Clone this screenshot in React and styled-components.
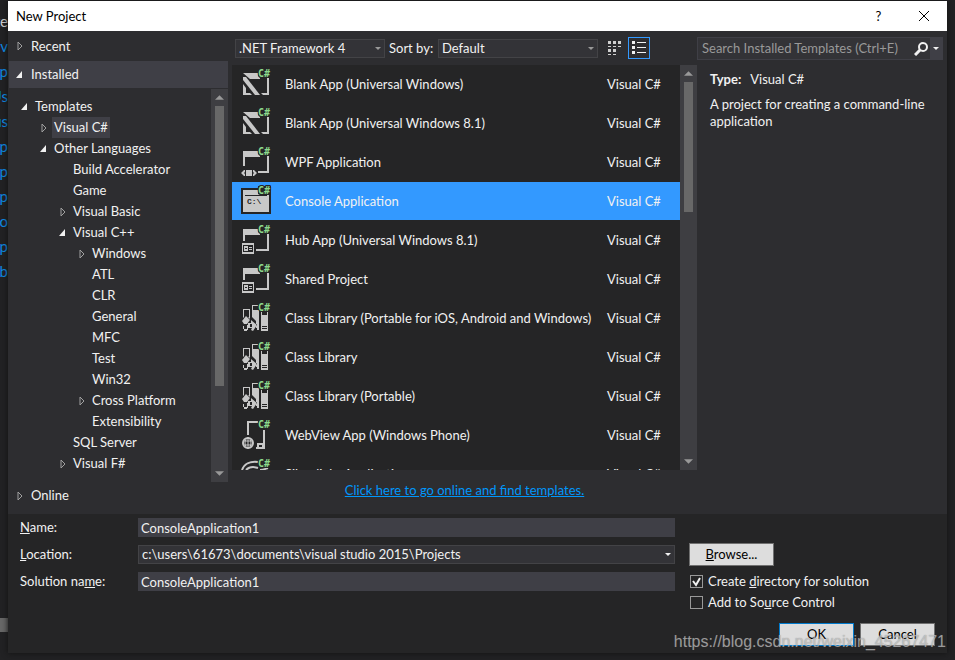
import React, { useState } from "react";
import styled, { createGlobalStyle, css } from "styled-components";

const GlobalStyle = createGlobalStyle`
  * {
    box-sizing: border-box;
  }
  body {
    margin: 0;
    background: #252526;
  }
  body, button, input, select {
    font-family: Lato, "Noto Sans", sans-serif;
    font-size: 13px;
    line-height: 17px;
  }
  ul {
    list-style: none;
    margin: 0;
    padding: 0;
  }
`;

const editorLines = ["te", "nv", "ip", "Us", "us", "ip", "ip", "ip", "lo", "ip", "ib"];

const tree = [
  { label: "Templates", level: 0, state: "open" },
  { label: "Visual C#", level: 1, state: "closed" },
  { label: "Other Languages", level: 1, state: "open" },
  { label: "Build Accelerator", level: 2 },
  { label: "Game", level: 2 },
  { label: "Visual Basic", level: 2, state: "closed" },
  { label: "Visual C++", level: 2, state: "open" },
  { label: "Windows", level: 3, state: "closed" },
  { label: "ATL", level: 3 },
  { label: "CLR", level: 3 },
  { label: "General", level: 3 },
  { label: "MFC", level: 3 },
  { label: "Test", level: 3 },
  { label: "Win32", level: 3 },
  { label: "Cross Platform", level: 3, state: "closed" },
  { label: "Extensibility", level: 3 },
  { label: "SQL Server", level: 2 },
  { label: "Visual F#", level: 2, state: "closed" },
];

const templates = [
  { name: "Blank App (Universal Windows)", icon: "blank" },
  { name: "Blank App (Universal Windows 8.1)", icon: "blank" },
  { name: "WPF Application", icon: "wpf" },
  { name: "Console Application", icon: "console" },
  { name: "Hub App (Universal Windows 8.1)", icon: "hub" },
  { name: "Shared Project", icon: "hub" },
  { name: "Class Library (Portable for iOS, Android and Windows)", icon: "library" },
  { name: "Class Library", icon: "library" },
  { name: "Class Library (Portable)", icon: "library" },
  { name: "WebView App (Windows Phone)", icon: "webview" },
  { name: "Silverlight Application", icon: "silverlight" },
];

const shapes = {
  blank: (
    <g fill="#c8c8c8">
      <path d="M2 5h15v3l2 2v1H9z" />
      <path d="M2 9h3l14 18h-5L2 12z" />
      <path d="M2 16l3 4v5h4l2 2H2z" />
      <path d="M26 10h2v17h-6l-2-2h6z" />
    </g>
  ),
  wpf: (
    <g fill="#c8c8c8">
      <path d="M2 5h15v3l2 2v1H4v9H2z" />
      <path d="M26 10h2v17H17v-2h9z" />
      <path d="M5 24h6v6H5z" />
      <path d="M3 24l-3 3 3 3h1v-2l-1-1 1-1v-2zM13 24l3 3-3 3h-1v-2l1-1-1-1v-2z" />
    </g>
  ),
  console: (
    <g>
      <path d="M0 3h17V1h13v28H0z" fill="#252526" />
      <path d="M2 5h15v4l2 1h9v17H2z" fill="#c8c8c8" />
      <path d="M4 10h22v1H4z" fill="#252526" />
      <text x="6" y="19" fontSize="8" fontWeight="bold" fill="#252526" fontFamily="Liberation Mono, monospace">
        C:\
      </text>
    </g>
  ),
  hub: (
    <g fill="#c8c8c8">
      <path d="M2 5h15v3l2 2v1H4v6H2z" />
      <path d="M26 10h2v17H15v-2h11z" />
      <path d="M1 19h12v11H1z" />
      <path d="M2 21h10v7H2z" fill="#252526" />
      <path d="M3 22h4v5H3zM8 23h3v1H8zM8 25h3v1H8z" />
      <path d="M4 24h2v1H4z" fill="#252526" />
    </g>
  ),
  library: (
    <g fill="#c8c8c8">
      <path d="M2 7h7v10l-2-2h1V8H3v7l-1 1z" />
      <path d="M11 3h6v1h-5v4h6v20h-2v-2h-1v-2h1v-2h-1v-3l-4-4z" />
      <path d="M20 9h1v4h5v-3h1v19h-7z" />
      <path d="M21 24h5v1h-5zM21 26h5v1h-5z" fill="#252526" />
      <path d="M5 14l4 4-3 4H3l-2-3z" />
      <path d="M2 24h1v3H2zM3 27h3v2H3z" />
      <path d="M7 21h3v-3l6 5-4 6-2-1 1-2H7v2H6v-5h1z" />
      <path d="M9 22h2v3H9z" fill="#252526" />
    </g>
  ),
  webview: (
    <g fill="#c8c8c8">
      <path d="M6 2h11v2H8v12H6z" />
      <path d="M22 11h2v19h-9v-2h1v-4h6z" />
      <path d="M18 26h3v2h-3z" fill="#252526" />
      <g fill="none" stroke="#c8c8c8">
        <circle cx="7" cy="24" r="5" strokeWidth="2" />
        <ellipse cx="7" cy="24" rx="3" ry="5" />
        <path d="M2 22h10M2 26h10M7 18v12" />
      </g>
    </g>
  ),
  silverlight: (
    <g fill="none" stroke="#c8c8c8" strokeWidth="2">
      <path d="M1 12C3 6 9 3 17 4" />
      <path d="M5 12c4-4 9-3 12-2" />
      <path d="M19 12c3 0 5-1 8-2" />
    </g>
  ),
};

const TemplateIcon = ({ type }) => (
  <svg width="32" height="32" viewBox="0 0 32 32" aria-hidden="true">
    {shapes[type]}
    <text
      x="17"
      y="9"
      fontSize="10"
      fontWeight="bold"
      fill="#8cd98c"
      stroke="#252526"
      strokeWidth="2"
      paintOrder="stroke"
      fontFamily="DejaVu Sans Mono, monospace"
    >
      C#
    </text>
  </svg>
);

const Arrow = ({ state }) => (
  <svg width="8" height="10" viewBox="0 0 8 10" aria-hidden="true">
    {state === "open" && <path d="M6 1v7H0z" fill="#f1f1f1" />}
    {state === "closed" && <path d="M2 1l4 4-4 4z" fill="none" stroke="#a0a0a0" />}
  </svg>
);

const Caret = ({ color = "#999999" }) => (
  <svg width="6" height="3" viewBox="0 0 6 3" aria-hidden="true">
    <path d="M0 0h6L3 3z" fill={color} />
  </svg>
);

const Combo = ({ id, label, caret, options }) => (
  <ComboBox>
    <select id={id} aria-label={label}>
      {options.map((o) => (
        <option key={o}>{o}</option>
      ))}
    </select>
    <Caret color={caret} />
  </ComboBox>
);

const Scroll = ({ size }) => (
  <ScrollBar>
    <svg width="9" height="5" viewBox="0 0 10 5">
      <path d="M0 5h10L5 0z" fill="#999" />
    </svg>
    <Track>
      <Thumb $size={size} />
    </Track>
    <svg width="9" height="5" viewBox="0 0 10 5">
      <path d="M0 0h10L5 5z" fill="#999" />
    </svg>
  </ScrollBar>
);

const App = () => {
  const [selected, setSelected] = useState(3);
  const [node, setNode] = useState("Visual C#");
  const [name, setName] = useState("ConsoleApplication1");
  const [solution, setSolution] = useState("ConsoleApplication1");
  const [createDir, setCreateDir] = useState(true);
  const [sourceControl, setSourceControl] = useState(false);

  return (
    <Page>
      <GlobalStyle />
      <Editor>
        {editorLines.map((line, i) => (
          <EditorLine key={i} $plain={i === 0}>
            {line}
          </EditorLine>
        ))}
        <EditorThumb />
      </Editor>
      <Dialog>
        <TitleBar>
          <h1>New Project</h1>
          <TitleButton aria-label="Help">?</TitleButton>
          <TitleButton aria-label="Close">
            <svg width="10" height="10" viewBox="0 0 10 10">
              <path d="M0 0l10 10M10 0L0 10" stroke="#000" />
            </svg>
          </TitleButton>
        </TitleBar>

        <Upper>
          <Sidebar>
            <Section>
              <Arrow state="closed" />
              Recent
            </Section>
            <Section $active>
              <Arrow state="open" />
              Installed
            </Section>
            <TreeArea>
              <Tree>
                {tree.map((item) => (
                  <TreeItem key={item.label} $level={item.level}>
                    <Arrow state={item.state} />
                    <TreeButton $active={item.label === node} onClick={() => setNode(item.label)}>
                      {item.label}
                    </TreeButton>
                  </TreeItem>
                ))}
              </Tree>
              <Scroll size="78%" />
            </TreeArea>
            <Section>
              <Arrow state="closed" />
              Online
            </Section>
          </Sidebar>

          <Center>
            <Toolbar>
              <FrameworkSlot>
                <Combo label="Framework" options={[".NET Framework 4"]} />
              </FrameworkSlot>
              <SortLabel htmlFor="sort">Sort by:</SortLabel>
              <SortSlot>
                <Combo id="sort" options={["Default"]} />
              </SortSlot>
              <ViewButton aria-label="Small icons">
                <svg width="14" height="14" viewBox="0 0 14 14" fill="#d0d0d0">
                  <path d="M0 0h3v3H0zM5 0h3v3H5zM10 0h3v3h-3zM0 5h3v1H0zM5 5h3v1H5zM10 5h3v1h-3z" />
                  <path d="M0 8h3v3H0zM5 8h3v3H5zM0 13h3v1H0zM5 13h3v1H5z" />
                </svg>
              </ViewButton>
              <ViewButton $active aria-label="Medium icons">
                <svg width="14" height="14" viewBox="0 0 14 14" fill="#f1f1f1">
                  <path d="M0 0h3v3H0zM0 5h3v3H0zM0 10h3v3H0z" />
                  <path d="M5 1h9v1H5zM5 6h9v1H5zM5 11h9v1H5z" />
                </svg>
              </ViewButton>
            </Toolbar>
            <ListArea>
              <TemplateList>
                {templates.map((t, i) => (
                  <li key={t.name}>
                    <TemplateRow $active={i === selected} onClick={() => setSelected(i)}>
                      <TemplateIcon type={t.icon} />
                      <span>{t.name}</span>
                      <span>Visual C#</span>
                    </TemplateRow>
                  </li>
                ))}
              </TemplateList>
              <Scroll size="35%" />
            </ListArea>
            <OnlineLink href="#online">Click here to go online and find templates.</OnlineLink>
          </Center>

          <Details>
            <SearchBox>
              <input aria-label="Search" placeholder="Search Installed Templates (Ctrl+E)" />
              <SearchButton aria-label="Search">
                <svg width="14" height="14" viewBox="0 0 14 14">
                  <circle cx="9" cy="5" r="4" fill="none" stroke="#f1f1f1" strokeWidth="2" />
                  <path d="M6 8l-5 5" stroke="#f1f1f1" strokeWidth="3" />
                </svg>
              </SearchButton>
              <SearchMenu aria-label="Search options">
                <Caret color="#f1f1f1" />
              </SearchMenu>
            </SearchBox>
            <Info>
              <p>
                <b>Type:</b>Visual C#
              </p>
              <p>A project for creating a command-line application</p>
            </Info>
          </Details>
        </Upper>

        <Lower>
          <Fields>
            <label htmlFor="name">
              <u>N</u>ame:
            </label>
            <TextBox id="name" value={name} onChange={(e) => setName(e.target.value)} />
            <label htmlFor="location">
              <u>L</u>ocation:
            </label>
            <Combo
              id="location"
              caret="#f1f1f1"
              options={["c:\\users\\61673\\documents\\visual studio 2015\\Projects"]}
            />
            <label htmlFor="solution">
              Solution na<u>m</u>e:
            </label>
            <TextBox id="solution" value={solution} onChange={(e) => setSolution(e.target.value)} />
          </Fields>
          <Options>
            <Button>
              <u>B</u>rowse...
            </Button>
            <Check>
              <input type="checkbox" checked={createDir} onChange={(e) => setCreateDir(e.target.checked)} />
              <svg width="13" height="13" viewBox="0 0 13 13">
                <path d="M3 6l3 4 4-7" fill="none" stroke="#f1f1f1" strokeWidth="2" />
              </svg>
              <span>
                Create <u>d</u>irectory for solution
              </span>
            </Check>
            <Check>
              <input type="checkbox" checked={sourceControl} onChange={(e) => setSourceControl(e.target.checked)} />
              <svg width="13" height="13" viewBox="0 0 13 13">
                <path d="M3 6l3 4 4-7" fill="none" stroke="#f1f1f1" strokeWidth="2" />
              </svg>
              <span>
                Add to So<u>u</u>rce Control
              </span>
            </Check>
            <Actions>
              <Button $primary>OK</Button>
              <Button>Cancel</Button>
            </Actions>
          </Options>
        </Lower>
      </Dialog>
      <Watermark>https://blog.csdn.net/weixin_45267471</Watermark>
    </Page>
  );
};

const Page = styled.div`
  position: relative;
  display: grid;
  grid-template-columns: 8px minmax(0, 1fr);
  height: 100vh;
  padding: 1px 8px 7px 0;
  overflow: hidden;
  background: #222224;
  color: #f1f1f1;
`;

const Editor = styled.div`
  display: flex;
  flex-direction: column;
  padding-top: 8px;
  overflow: hidden;
`;

const EditorLine = styled.span`
  display: flex;
  justify-content: flex-end;
  flex: none;
  height: 25px;
  font-size: 15px;
  line-height: 25px;
  color: ${({ $plain }) => ($plain ? "#d0d0d0" : "#0e8be6")};
`;

const EditorThumb = styled.div`
  height: 14px;
  margin-top: auto;
  margin-bottom: 21px;
  background: #686868;
`;

const Dialog = styled.main`
  display: flex;
  flex-direction: column;
  min-height: 0;
  background: #252526;
  box-shadow: 0 0 6px #111;
`;

const TitleBar = styled.header`
  display: flex;
  align-items: center;
  flex: none;
  height: 30px;
  padding: 0 1px 0 8px;
  background: #fff;
  color: #000;

  h1 {
    flex: 1;
    margin: 0;
    font-size: 13px;
    font-weight: 400;
  }
`;

const TitleButton = styled.button`
  width: 45px;
  height: 28px;
  padding: 0;
  border: 0;
  background: none;
  color: #000;
`;

const Upper = styled.section`
  display: grid;
  grid-template-columns: 220px minmax(0, 1fr) 250px;
  flex: 1;
  min-height: 0;
  background: #2d2d30;
`;

const Sidebar = styled.nav`
  display: flex;
  flex-direction: column;
  min-height: 0;
  padding-bottom: 5px;
`;

const Section = styled.button`
  display: flex;
  align-items: center;
  gap: 7px;
  flex: none;
  height: 27px;
  margin-left: 1px;
  padding: 0 7px;
  border: 0;
  background: none;
  color: #f1f1f1;
  text-align: left;

  &:first-child {
    height: 30px;
  }
  ${({ $active }) =>
    $active &&
    css`
      background: #3f3f46;
    `}
`;

const TreeArea = styled.div`
  display: flex;
  flex: 1;
  min-height: 0;
  padding-top: 1px;
`;

const Tree = styled.ul`
  flex: 1;
  padding-top: 7px;
  overflow: hidden;
`;

const TreeItem = styled.li`
  display: flex;
  align-items: center;
  gap: 2px;
  height: 21px;
  padding-left: ${({ $level }) => 13 + $level * 19}px;
`;

const TreeButton = styled.button`
  height: 21px;
  padding: 0 2px;
  border: 2px solid transparent;
  border-width: 0 2px;
  background: ${({ $active }) => ($active ? "#3f3f46" : "none")};
  background-clip: padding-box;
  color: #f1f1f1;
`;

const ScrollBar = styled.div`
  display: flex;
  flex-direction: column;
  align-items: center;
  gap: 6px;
  width: 17px;
  flex: none;
  padding: 6px 0;
  background: #3e3e42;

  svg {
    flex: none;
  }
`;

const Track = styled.div`
  flex: 1;
  width: 9px;
`;

const Thumb = styled.div`
  height: ${({ $size }) => $size};
  background: #686868;
`;

const Center = styled.div`
  display: flex;
  flex-direction: column;
  min-height: 0;
  padding-left: 4px;
`;

const Toolbar = styled.div`
  display: flex;
  align-items: center;
  flex: none;
  gap: 4px;
  height: 34px;
  padding-left: 3px;
`;

const FrameworkSlot = styled.div`
  width: 150px;
`;

const SortLabel = styled.label`
  width: 45px;
  white-space: nowrap;
`;

const SortSlot = styled.div`
  width: 160px;
`;

const ComboBox = styled.div`
  position: relative;
  display: flex;
  align-items: center;

  select {
    appearance: none;
    width: 100%;
    height: 19px;
    padding: 0 20px 0 3px;
    border: 1px solid #434346;
    border-radius: 0;
    background: #333337;
    color: #f1f1f1;
  }
  svg {
    position: absolute;
    right: 4px;
    pointer-events: none;
  }
`;

const ViewButton = styled.button`
  display: grid;
  place-items: center;
  width: 22px;
  height: 22px;
  margin-left: ${({ $active }) => ($active ? "-2px" : "2px")};
  padding: 0;
  border: 1px solid ${({ $active }) => ($active ? "#3399ff" : "transparent")};
  background: none;
`;

const ListArea = styled.div`
  display: flex;
  flex: 1;
  min-height: 0;
`;

const TemplateList = styled.ul`
  flex: 1;
  min-width: 0;
  overflow: hidden;
  background: #252526;
`;

const TemplateRow = styled.button`
  display: grid;
  grid-template-columns: 44px minmax(0, 1fr) 73px;
  align-items: center;
  width: 100%;
  height: 38px;
  margin-bottom: 1px;
  padding: 0 0 0 9px;
  border: 0;
  background: ${({ $active }) => ($active ? "#3399ff" : "none")};
  color: #f1f1f1;
  text-align: left;
  white-space: nowrap;
`;

const OnlineLink = styled.a`
  flex: none;
  align-self: center;
  height: 44px;
  line-height: 40px;
  color: #0097fb;
`;

const Details = styled.aside`
  padding: 6px 4px 0 0;
`;

const SearchBox = styled.div`
  display: flex;
  height: 23px;
  border: 1px solid #3f3f46;
  background: #333337;

  input {
    flex: 1;
    min-width: 0;
    padding: 0 0 0 4px;
    border: 0;
    background: none;
    color: #f1f1f1;
  }
  input::placeholder {
    color: #999999;
  }
`;

const SearchButton = styled.button`
  display: grid;
  place-items: center;
  width: 18px;
  padding: 0;
  border: 0;
  background: none;
`;

const SearchMenu = styled.button`
  display: grid;
  place-items: center;
  width: 12px;
  padding: 0;
  border: 0;
  background: #3f3f46;
`;

const Info = styled.div`
  padding: 11px 8px 0 13px;

  p {
    margin: 0 0 8px;
  }
  b {
    margin-right: 9px;
  }
`;

const Lower = styled.form.attrs({ onSubmit: (e) => e.preventDefault() })`
  display: grid;
  grid-template-columns: minmax(0, 1fr) 246px;
  gap: 14px;
  flex: none;
  padding: 4px 12px 7px;
`;

const Fields = styled.div`
  display: grid;
  grid-template-columns: 118px minmax(0, 1fr);
  grid-auto-rows: 19px;
  row-gap: 8px;
  align-content: start;
  align-items: center;
`;

const TextBox = styled.input`
  height: 19px;
  min-width: 0;
  padding: 0 3px;
  border: 0;
  background: #3f3f46;
  color: #f1f1f1;
`;

const Options = styled.div`
  display: flex;
  flex-direction: column;
  align-items: flex-start;
  padding-top: 25px;
`;

const Button = styled.button.attrs({ type: "button" })`
  width: 85px;
  height: 23px;
  margin-bottom: 5px;
  padding: 0;
  border: 1px solid ${({ $primary }) => ($primary ? "#007acc" : "#707070")};
  background: #dddddd;
  color: #000;
`;

const Check = styled.label`
  position: relative;
  display: flex;
  align-items: center;
  gap: 5px;
  height: 21px;
  padding-left: 1px;

  input {
    appearance: none;
    width: 13px;
    height: 13px;
    margin: 0;
    border: 1px solid #999999;
    background: #252526;
  }
  svg {
    position: absolute;
    left: 1px;
    display: none;
    pointer-events: none;
  }
  input:checked + svg {
    display: block;
  }
`;

const Actions = styled.div`
  display: flex;
  gap: 6px;
  align-self: flex-end;
  padding-top: 10px;

  ${Button} {
    width: 75px;
    margin: 0;
  }
`;

const Watermark = styled.div`
  position: absolute;
  right: 9px;
  bottom: 10px;
  font-family: "Liberation Sans", sans-serif;
  font-size: 16px;
  color: rgba(220, 220, 220, 0.6);
  text-shadow: 0 0 1px rgba(80, 80, 80, 0.6);
  pointer-events: none;
`;

export default App;
